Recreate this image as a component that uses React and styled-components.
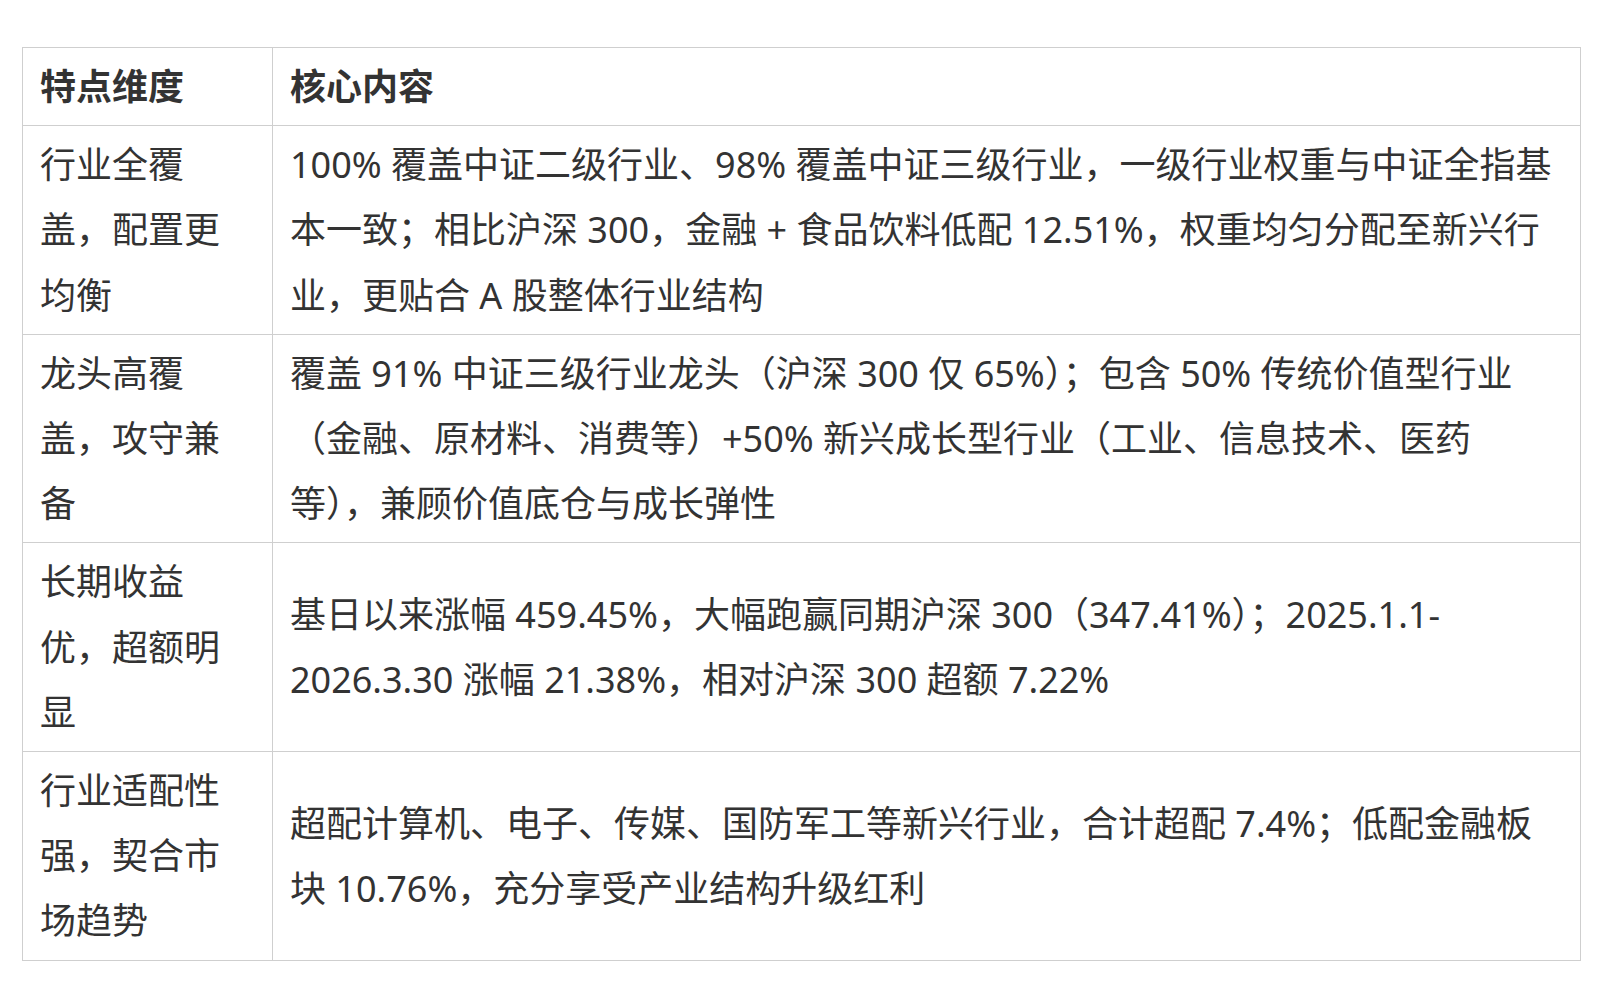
import React from 'react';
import styled, { createGlobalStyle } from 'styled-components';

const GlobalStyle = createGlobalStyle`
  html, body {
    margin: 0;
    padding: 0;
    background: #ffffff;
  }

  body {
    font-family: "Noto Sans", "Noto Sans CJK SC", sans-serif;
    color: #333333;
  }
`;

const Page = styled.div`
  padding: 47px 21px 0 22px;
`;

const Table = styled.table`
  width: 1559px;
  border-collapse: collapse;
  table-layout: fixed;
  font-size: 36px;
  line-height: 65.2px;
  color: #333333;
`;

const HeadCell = styled.th`
  border: 1px solid #cfcfcf;
  padding: 6px 17px;
  text-align: left;
  font-weight: 700;
  vertical-align: middle;
`;

const Cell = styled.td`
  border: 1px solid #cfcfcf;
  padding: 6px 17px;
  vertical-align: middle;
  white-space: nowrap;
`;

const Line = styled.span`
  display: block;
`;

const rows = [
  {
    feature: ['行业全覆', '盖，配置更', '均衡'],
    content: [
      '100% 覆盖中证二级行业、98% 覆盖中证三级行业，一级行业权重与中证全指基',
      '本一致；相比沪深 300，金融 + 食品饮料低配 12.51%，权重均匀分配至新兴行',
      '业，更贴合 A 股整体行业结构',
    ],
  },
  {
    feature: ['龙头高覆', '盖，攻守兼', '备'],
    content: [
      '覆盖 91% 中证三级行业龙头（沪深 300 仅 65%）；包含 50% 传统价值型行业',
      '（金融、原材料、消费等）+50% 新兴成长型行业（工业、信息技术、医药',
      '等），兼顾价值底仓与成长弹性',
    ],
  },
  {
    feature: ['长期收益', '优，超额明', '显'],
    content: [
      '基日以来涨幅 459.45%，大幅跑赢同期沪深 300（347.41%）；2025.1.1-',
      '2026.3.30 涨幅 21.38%，相对沪深 300 超额 7.22%',
    ],
  },
  {
    feature: ['行业适配性', '强，契合市', '场趋势'],
    content: [
      '超配计算机、电子、传媒、国防军工等新兴行业，合计超配 7.4%；低配金融板',
      '块 10.76%，充分享受产业结构升级红利',
    ],
  },
];

const App = () => {
  return (
    <Page>
      <GlobalStyle />
      <Table>
        <colgroup>
          <col style={{ width: '250px' }} />
          <col />
        </colgroup>
        <thead>
          <tr>
            <HeadCell>特点维度</HeadCell>
            <HeadCell>核心内容</HeadCell>
          </tr>
        </thead>
        <tbody>
          {rows.map((row) => (
            <tr key={row.feature.join('')}>
              <Cell>
                {row.feature.map((t) => (
                  <Line key={t}>{t}</Line>
                ))}
              </Cell>
              <Cell>
                {row.content.map((t) => (
                  <Line key={t}>{t}</Line>
                ))}
              </Cell>
            </tr>
          ))}
        </tbody>
      </Table>
    </Page>
  );
};

export default App;
